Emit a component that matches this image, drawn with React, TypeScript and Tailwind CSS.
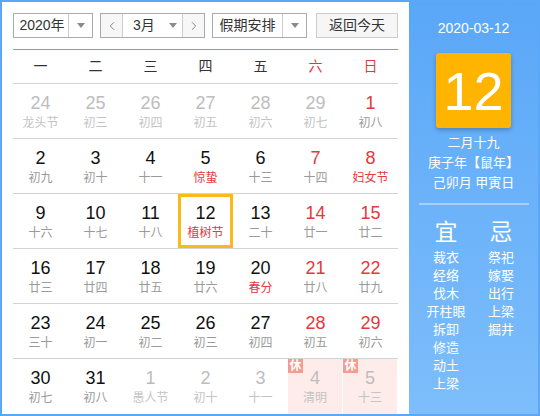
import { ChevronLeft, ChevronRight } from 'lucide-react'

type Day = {
  n: number
  lunar: string
  other?: boolean // not in current month
  weekend?: boolean
  festival?: boolean
  rest?: boolean
  selected?: boolean
}

const weekdays = ['一', '二', '三', '四', '五', '六', '日']

const rows: Day[][] = [
  [
    { n: 24, lunar: '龙头节', other: true },
    { n: 25, lunar: '初三', other: true },
    { n: 26, lunar: '初四', other: true },
    { n: 27, lunar: '初五', other: true },
    { n: 28, lunar: '初六', other: true },
    { n: 29, lunar: '初七', other: true },
    { n: 1, lunar: '初八', weekend: true },
  ],
  [
    { n: 2, lunar: '初九' },
    { n: 3, lunar: '初十' },
    { n: 4, lunar: '十一' },
    { n: 5, lunar: '惊蛰', festival: true },
    { n: 6, lunar: '十三' },
    { n: 7, lunar: '十四', weekend: true },
    { n: 8, lunar: '妇女节', weekend: true, festival: true },
  ],
  [
    { n: 9, lunar: '十六' },
    { n: 10, lunar: '十七' },
    { n: 11, lunar: '十八' },
    { n: 12, lunar: '植树节', festival: true, selected: true },
    { n: 13, lunar: '二十' },
    { n: 14, lunar: '廿一', weekend: true },
    { n: 15, lunar: '廿二', weekend: true },
  ],
  [
    { n: 16, lunar: '廿三' },
    { n: 17, lunar: '廿四' },
    { n: 18, lunar: '廿五' },
    { n: 19, lunar: '廿六' },
    { n: 20, lunar: '春分', festival: true },
    { n: 21, lunar: '廿八', weekend: true },
    { n: 22, lunar: '廿九', weekend: true },
  ],
  [
    { n: 23, lunar: '三十' },
    { n: 24, lunar: '初一' },
    { n: 25, lunar: '初二' },
    { n: 26, lunar: '初三' },
    { n: 27, lunar: '初四' },
    { n: 28, lunar: '初五', weekend: true },
    { n: 29, lunar: '初六', weekend: true },
  ],
  [
    { n: 30, lunar: '初七' },
    { n: 31, lunar: '初八' },
    { n: 1, lunar: '愚人节', other: true },
    { n: 2, lunar: '初十', other: true },
    { n: 3, lunar: '十一', other: true },
    { n: 4, lunar: '清明', other: true, rest: true },
    { n: 5, lunar: '十三', other: true, rest: true },
  ],
]

const yi = ['裁衣', '经络', '伐木', '开柱眼', '拆卸', '修造', '动土', '上梁']
const ji = ['祭祀', '嫁娶', '出行', '上梁', '掘井']

function Caret() {
  return <span className="w-0 h-0 border-x-[4px] border-x-transparent border-t-[5px] border-t-[#8a8a8a]" />
}

function DayCell({ d }: { d: Day }) {
  const numColor = d.other ? 'text-[#bdbdbd]' : d.weekend ? 'text-[#e4393c]' : 'text-[#111]'
  const lunarColor = d.other
    ? 'text-[#c4c4c4]'
    : d.festival
      ? 'text-[#e4393c]'
      : 'text-[#9a9a9a]'
  return (
    <div className={`relative h-full flex flex-col items-center pt-[9px] ${d.rest ? 'bg-[#fdecea] mr-px' : ''}`}>
      {d.rest && (
        <span className="absolute left-0 top-0 w-[15px] h-[14px] bg-[#f79b90] text-white text-[12px] leading-[14px] text-center font-bold">
          休
        </span>
      )}
      {d.selected && <span className="absolute inset-0 border-[3px] border-[#fdb914] pointer-events-none" />}
      <span className={`text-[18px] leading-[20px] ${numColor}`}>{d.n}</span>
      <span className={`text-[12px] leading-[18px] mt-px ${lunarColor}`}>{d.lunar}</span>
    </div>
  )
}

export default function App() {
  return (
    <div
      className="w-[540px] h-[416px] border-2 border-[#5ba8f9] flex bg-white text-[#333] overflow-hidden"
      style={{ fontFamily: '"Liberation Sans", "Noto Sans CJK SC", sans-serif' }}
    >
      {/* calendar */}
      <div className="w-[407px] shrink-0 pl-[11px] pt-[11px]">
        <div className="w-[385px] h-[25px] flex text-[14px] whitespace-nowrap">
          <div className="w-[80px] flex border border-[#aaa]">
            <span className="flex-1 flex items-center justify-center border-r border-[#ccc] pl-[2px]">2020年</span>
            <span className="w-[23px] flex items-center justify-center">
              <Caret />
            </span>
          </div>
          <div className="ml-[7px] w-[105px] flex border border-[#aaa]">
            <span className="w-[22px] flex items-center justify-center bg-[#f7f7f7] border-r border-[#ccc] text-[#777]">
              <ChevronLeft size={14} strokeWidth={1.5} />
            </span>
            <span className="flex-1 flex items-center pl-[10px] gap-[14px]">
              3月
              <Caret />
            </span>
            <span className="w-[22px] flex items-center justify-center bg-[#f7f7f7] border-l border-[#ccc] text-[#777]">
              <ChevronRight size={14} strokeWidth={1.5} />
            </span>
          </div>
          <div className="ml-[7px] w-[95px] flex border border-[#aaa]">
            <span className="flex-1 flex items-center justify-center border-r border-[#ccc]">假期安排</span>
            <span className="w-[23px] flex items-center justify-center">
              <Caret />
            </span>
          </div>
          <div className="ml-[9px] w-[82px] flex items-center justify-center border border-[#ccc] bg-[#f6f6f6]">
            返回今天
          </div>
        </div>

        <div className="mt-[11px] w-[385px] border-t border-[#5ba8f9]">
          <div className="h-[34px] grid grid-cols-7 items-center border-b border-[#d3d3d3] text-[14px]">
            {weekdays.map((w, i) => (
              <span key={w} className={`text-center ${i > 4 ? 'text-[#e4393c]' : 'text-[#333]'}`}>
                {w}
              </span>
            ))}
          </div>
          {rows.map((r, ri) => (
            <div
              key={ri}
              className={`h-[55px] grid grid-cols-7 ${ri < 5 ? 'border-b border-[#d3d3d3]' : ''}`}
            >
              {r.map((d, di) => (
                <DayCell key={di} d={d} />
              ))}
            </div>
          ))}
        </div>
      </div>

      {/* side panel */}
      <div className="flex-1 bg-gradient-to-b from-[#5aa7f8] to-[#7dbefb] text-white flex flex-col items-center">
        <div className="mt-[16px] text-[14px] leading-[20px]">2020-03-12</div>
        <div className="mt-[15px] w-[75px] h-[75px] rounded-[3px] bg-[#ffb500] shadow-[0_2px_4px_rgba(0,0,0,0.25)] flex items-center justify-center text-[54px] leading-none">
          12
        </div>
        <div className="mt-[5px] flex flex-col items-center text-[13px] leading-[20px]">
          <span>二月十九</span>
          <span>庚子年【鼠年】</span>
          <span>己卯月 甲寅日</span>
        </div>
        <div className="mt-[10px] w-[110px] h-[2px] bg-[#a6d1fc]" />
        <div className="w-[110px] grid grid-cols-2 mt-[14px]">
          <div className="flex flex-col items-center">
            <span className="text-[23px] leading-[26px] mb-[4px]">宜</span>
            {yi.map(t => (
              <span key={t} className="text-[13px] leading-[18px]">
                {t}
              </span>
            ))}
          </div>
          <div className="flex flex-col items-center">
            <span className="text-[23px] leading-[26px] mb-[4px]">忌</span>
            {ji.map(t => (
              <span key={t} className="text-[13px] leading-[18px]">
                {t}
              </span>
            ))}
          </div>
        </div>
      </div>
    </div>
  )
}
